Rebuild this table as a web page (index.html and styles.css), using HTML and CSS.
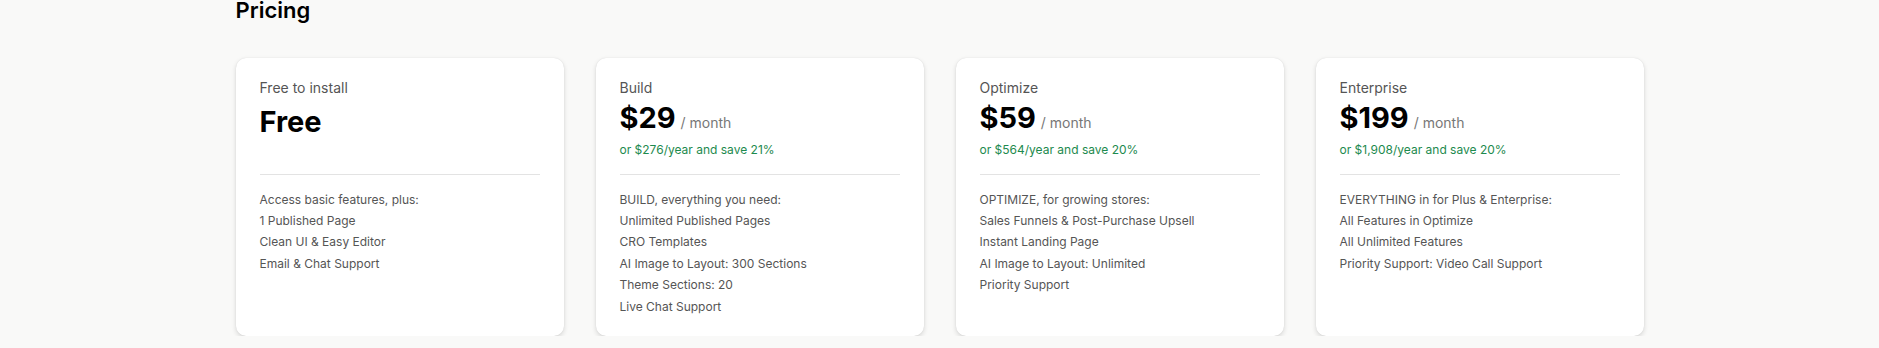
FILE: index.html
```html
<!DOCTYPE html>
<html lang="en">
<head>
<meta charset="utf-8">
<title>Pricing</title>
<link rel="stylesheet" href="styles.css">
</head>
<body>
<main class="page">
  <h2 class="page-title">Pricing</h2>
  <div class="plans">
    <section class="plan">
      <div class="plan-head">
        <div class="plan-name">Free to install</div>
        <div class="plan-price plan-price--free"><span class="amount">Free</span></div>
      </div>
      <ul class="features">
        <li>Access basic features, plus:</li>
        <li>1 Published Page</li>
        <li>Clean UI &amp; Easy Editor</li>
        <li>Email &amp; Chat Support</li>
      </ul>
    </section>
    <section class="plan">
      <div class="plan-head">
        <div class="plan-name">Build</div>
        <div class="plan-price"><span class="amount">$29</span><span class="period">/ month</span></div>
        <div class="plan-annual">or $276/year and save 21%</div>
      </div>
      <ul class="features">
        <li>BUILD, everything you need:</li>
        <li>Unlimited Published Pages</li>
        <li>CRO Templates</li>
        <li>AI Image to Layout: 300 Sections</li>
        <li>Theme Sections: 20</li>
        <li>Live Chat Support</li>
      </ul>
    </section>
    <section class="plan">
      <div class="plan-head">
        <div class="plan-name">Optimize</div>
        <div class="plan-price"><span class="amount">$59</span><span class="period">/ month</span></div>
        <div class="plan-annual">or $564/year and save 20%</div>
      </div>
      <ul class="features">
        <li>OPTIMIZE, for growing stores:</li>
        <li>Sales Funnels &amp; Post-Purchase Upsell</li>
        <li>Instant Landing Page</li>
        <li>AI Image to Layout: Unlimited</li>
        <li>Priority Support</li>
      </ul>
    </section>
    <section class="plan">
      <div class="plan-head">
        <div class="plan-name">Enterprise</div>
        <div class="plan-price"><span class="amount">$199</span><span class="period">/ month</span></div>
        <div class="plan-annual">or $1,908/year and save 20%</div>
      </div>
      <ul class="features">
        <li>EVERYTHING in for Plus &amp; Enterprise:</li>
        <li>All Features in Optimize</li>
        <li>All Unlimited Features</li>
        <li>Priority Support: Video Call Support</li>
      </ul>
    </section>
  </div>
</main>
</body>
</html>
```

FILE: styles.css
```css
* { box-sizing: border-box; }

html, body {
  margin: 0;
  padding: 0;
  background: #f9f9f8;
  font-family: Inter, "Noto Sans", sans-serif;
  color: #303030;
}

.page {
  width: 1408px;
  margin: 0 auto;
}

.page-title {
  margin: 0;
  font-size: 22px;
  line-height: 20px;
  font-weight: 600;
  color: #000;
}

.plans {
  margin-top: 38px;
  display: grid;
  grid-template-columns: repeat(4, 328px);
  gap: 32px;
}

.plan {
  background: #fff;
  border-radius: 10px;
  padding: 20px 24px 19px;
  box-shadow: 0 2px 5px rgba(0, 0, 0, 0.14), 0 0 1px rgba(0, 0, 0, 0.12);
}

.plan-head {
  height: 97px;
  border-bottom: 1px solid #e3e3e3;
}

.plan-name {
  font-size: 14px;
  line-height: 20px;
  color: #555;
}

.plan-price {
  height: 40px;
  font-size: 29px;
  line-height: 40px;
  white-space: nowrap;
}

.plan-price--free {
  margin-top: 4px;
}

.amount {
  font-size: 29px;
  font-weight: 700;
  color: #000;
}

.period {
  margin-left: 5px;
  font-size: 14px;
  line-height: 1;
  color: #777;
}

.plan-annual {
  margin-top: 2px;
  font-size: 12px;
  line-height: 20px;
  color: #1d8a4e;
}

.features {
  list-style: none;
  margin: 13.5px 0 0;
  padding: 0;
  font-size: 12px;
  line-height: 21.4px;
  color: #555;
}
```
